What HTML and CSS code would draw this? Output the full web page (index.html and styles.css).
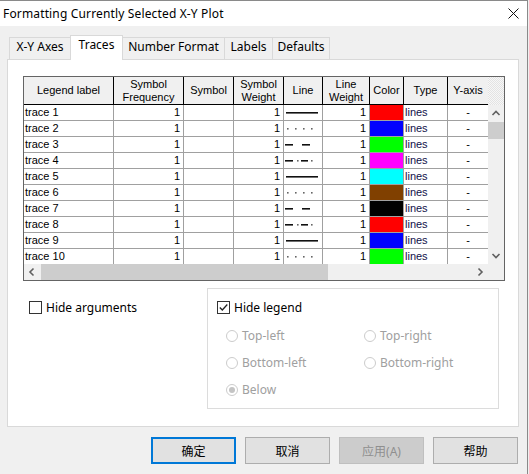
FILE: index.html
```html
<!DOCTYPE html>
<html>
<head>
<meta charset="utf-8">
<link rel="stylesheet" href="styles.css">
</head>
<body>
<div class="window">
  <div class="titlebar">
    <span class="title">Formatting Currently Selected X-Y Plot</span>
    <svg class="close" width="11" height="11" viewBox="0 0 11 11"><path d="M0.5 0.5 L10.5 10.5 M10.5 0.5 L0.5 10.5" stroke="#111" stroke-width="1" fill="none"/></svg>
  </div>
  <div class="tabs">
    <div class="tab t1">X-Y Axes</div>
    <div class="tab t2 sel">Traces</div>
    <div class="tab t3">Number Format</div>
    <div class="tab t4">Labels</div>
    <div class="tab t5">Defaults</div>
  </div>
  <div class="panel">
    <div class="grid">
      <div class="head">
        <div class="hc">Legend label</div>
        <div class="hc">Symbol<br>Frequency</div>
        <div class="hc">Symbol</div>
        <div class="hc">Symbol<br>Weight</div>
        <div class="hc">Line</div>
        <div class="hc">Line<br>Weight</div>
        <div class="hc">Color</div>
        <div class="hc">Type</div>
        <div class="hc">Y-axis</div>
      </div>
      <div class="hatch"></div>
      <div class="rows">
        <div class="c lbl">trace 1</div><div class="c num">1</div><div class="c"></div><div class="c num">1</div><div class="c ln"><svg viewBox="0 0 38 15" width="38" height="15"><rect x="2" y="7" width="32" height="1.6" fill="#111"/></svg></div><div class="c num">1</div><div class="c col red"></div><div class="c typ">lines</div><div class="c ya">-</div>
        <div class="c lbl">trace 2</div><div class="c num">1</div><div class="c"></div><div class="c num">1</div><div class="c ln"><svg viewBox="0 0 38 15" width="38" height="15"><g fill="#666"><rect x="3" y="7" width="1.6" height="1.6"/><rect x="11" y="7" width="1.6" height="1.6"/><rect x="19" y="7" width="1.6" height="1.6"/><rect x="27" y="7" width="1.6" height="1.6"/></g></svg></div><div class="c num">1</div><div class="c col blue"></div><div class="c typ">lines</div><div class="c ya">-</div>
        <div class="c lbl">trace 3</div><div class="c num">1</div><div class="c"></div><div class="c num">1</div><div class="c ln"><svg viewBox="0 0 38 15" width="38" height="15"><g fill="#111"><rect x="1" y="7" width="8" height="1.6"/><rect x="18" y="7" width="8" height="1.6"/></g></svg></div><div class="c num">1</div><div class="c col lime"></div><div class="c typ">lines</div><div class="c ya">-</div>
        <div class="c lbl">trace 4</div><div class="c num">1</div><div class="c"></div><div class="c num">1</div><div class="c ln"><svg viewBox="0 0 38 15" width="38" height="15"><g fill="#111"><rect x="1" y="7" width="8" height="1.6"/><rect x="17" y="7" width="7" height="1.6"/></g><g fill="#666"><rect x="13" y="7" width="1.6" height="1.6"/><rect x="27" y="7" width="1.6" height="1.6"/></g></svg></div><div class="c num">1</div><div class="c col magenta"></div><div class="c typ">lines</div><div class="c ya">-</div>
        <div class="c lbl">trace 5</div><div class="c num">1</div><div class="c"></div><div class="c num">1</div><div class="c ln"><svg viewBox="0 0 38 15" width="38" height="15"><rect x="2" y="7" width="32" height="1.6" fill="#111"/></svg></div><div class="c num">1</div><div class="c col cyan"></div><div class="c typ">lines</div><div class="c ya">-</div>
        <div class="c lbl">trace 6</div><div class="c num">1</div><div class="c"></div><div class="c num">1</div><div class="c ln"><svg viewBox="0 0 38 15" width="38" height="15"><g fill="#666"><rect x="3" y="7" width="1.6" height="1.6"/><rect x="11" y="7" width="1.6" height="1.6"/><rect x="19" y="7" width="1.6" height="1.6"/><rect x="27" y="7" width="1.6" height="1.6"/></g></svg></div><div class="c num">1</div><div class="c col brown"></div><div class="c typ">lines</div><div class="c ya">-</div>
        <div class="c lbl">trace 7</div><div class="c num">1</div><div class="c"></div><div class="c num">1</div><div class="c ln"><svg viewBox="0 0 38 15" width="38" height="15"><g fill="#111"><rect x="1" y="7" width="8" height="1.6"/><rect x="18" y="7" width="8" height="1.6"/></g></svg></div><div class="c num">1</div><div class="c col black"></div><div class="c typ">lines</div><div class="c ya">-</div>
        <div class="c lbl">trace 8</div><div class="c num">1</div><div class="c"></div><div class="c num">1</div><div class="c ln"><svg viewBox="0 0 38 15" width="38" height="15"><g fill="#111"><rect x="1" y="7" width="8" height="1.6"/><rect x="17" y="7" width="7" height="1.6"/></g><g fill="#666"><rect x="13" y="7" width="1.6" height="1.6"/><rect x="27" y="7" width="1.6" height="1.6"/></g></svg></div><div class="c num">1</div><div class="c col red"></div><div class="c typ">lines</div><div class="c ya">-</div>
        <div class="c lbl">trace 9</div><div class="c num">1</div><div class="c"></div><div class="c num">1</div><div class="c ln"><svg viewBox="0 0 38 15" width="38" height="15"><rect x="2" y="7" width="32" height="1.6" fill="#111"/></svg></div><div class="c num">1</div><div class="c col blue"></div><div class="c typ">lines</div><div class="c ya">-</div>
        <div class="c lbl">trace 10</div><div class="c num">1</div><div class="c"></div><div class="c num">1</div><div class="c ln"><svg viewBox="0 0 38 15" width="38" height="15"><g fill="#666"><rect x="3" y="7" width="1.6" height="1.6"/><rect x="11" y="7" width="1.6" height="1.6"/><rect x="19" y="7" width="1.6" height="1.6"/><rect x="27" y="7" width="1.6" height="1.6"/></g></svg></div><div class="c num">1</div><div class="c col lime"></div><div class="c typ">lines</div><div class="c ya">-</div>
      </div>
      <div class="vscroll">
        <div class="arrow"><svg width="16" height="16" viewBox="0 0 16 16"><polyline points="4.5,10 8,6.5 11.5,10" fill="none" stroke="#606060" stroke-width="1.6"/></svg></div>
        <div class="vthumb"></div>
        <div class="vtrack"></div>
        <div class="arrow"><svg width="16" height="16" viewBox="0 0 16 16"><polyline points="4.5,6 8,9.5 11.5,6" fill="none" stroke="#606060" stroke-width="1.6"/></svg></div>
      </div>
      <div class="hscroll">
        <div class="arrow"><svg width="16" height="16" viewBox="0 0 16 16"><polyline points="9.5,4.5 6,8 9.5,11.5" fill="none" stroke="#606060" stroke-width="1.6"/></svg></div>
        <div class="hthumb"></div>
        <div class="htrack"></div>
        <div class="arrow"><svg width="16" height="16" viewBox="0 0 16 16"><polyline points="6.5,4.5 10,8 6.5,11.5" fill="none" stroke="#606060" stroke-width="1.6"/></svg></div>
      </div>
      <div class="corner"></div>
    </div>
    <div class="options">
      <div class="opt-left">
        <label class="chk"><span class="box"></span><span>Hide arguments</span></label>
      </div>
      <div class="group">
        <label class="chk"><span class="box"><svg width="11" height="11" viewBox="0 0 11 11"><polyline points="1.8,5.5 4.3,8 9.3,2.5" fill="none" stroke="#222" stroke-width="1.3"/></svg></span><span>Hide legend</span></label>
        <div class="radios">
          <div class="radio"><span class="circ"></span><span>Top-left</span></div>
          <div class="radio"><span class="circ"></span><span>Top-right</span></div>
          <div class="radio"><span class="circ"></span><span>Bottom-left</span></div>
          <div class="radio"><span class="circ"></span><span>Bottom-right</span></div>
          <div class="radio"><span class="circ on"></span><span>Below</span></div>
        </div>
      </div>
    </div>
  </div>
  <div class="buttons">
    <div class="btn default">确定</div>
    <div class="btn">取消</div>
    <div class="btn disabled">应用(A)</div>
    <div class="btn">帮助</div>
  </div>
</div>
</body>
</html>
```

FILE: styles.css
```css
html, body {
  margin: 0;
  padding: 0;
  background: #f0f0f0;
}
body {
  font-family: "Noto Sans", "Noto Sans CJK SC", sans-serif;
  font-size: 12px;
  color: #000;
}
.window {
  width: 528px;
  height: 474px;
  box-sizing: border-box;
  border-top: 1px solid #8a8a8a;
  border-right: 1px solid #8a8a8a;
  background: #f0f0f0;
  overflow: hidden;
}
.titlebar {
  height: 25px;
  background: #fff;
  display: flex;
  align-items: center;
  justify-content: space-between;
  padding: 0 8px 0 3px;
}
.title {
  white-space: nowrap;
  letter-spacing: 0.15px;
}
.close {
  display: block;
}
.tabs {
  display: flex;
  align-items: flex-end;
  height: 24px;
  margin-top: 9px;
  padding-left: 9px;
}
.tab {
  height: 22px;
  box-sizing: border-box;
  border: 1px solid #d9d9d9;
  border-bottom: none;
  margin-right: -1px;
  background: #f0f0f0;
  text-align: center;
  line-height: 18px;
  white-space: nowrap;
}
.t1 { width: 62px; }
.t2 { width: 53px; }
.t3 { width: 103px; }
.t4 { width: 49px; }
.t5 { width: 58px; }
.tab.sel {
  height: 25px;
  margin-bottom: -1px;
  background: #fff;
  position: relative;
  z-index: 1;
  padding-top: 0;
}
.panel {
  margin-left: 7px;
  width: 512px;
  height: 368px;
  box-sizing: border-box;
  border: 1px solid #d9d9d9;
  background: #fff;
  padding: 16px 0 0 15px;
}
.grid {
  display: grid;
  grid-template-columns: 464px 16px;
  grid-template-rows: 28px 159px 16px;
  width: 482px;
  height: 205px;
  box-sizing: border-box;
  border: 1px solid #646464;
  font-family: "Liberation Sans", Arial, sans-serif;
  font-size: 11px;
}
.head, .rows {
  display: grid;
  grid-template-columns: 90px 70px 50px 50px 39px 47px 34px 44px 40px;
}
.head {
  background: #f0f0f0;
}
.hc {
  border-right: 1px solid #000;
  border-bottom: 1px solid #000;
  display: flex;
  align-items: center;
  justify-content: center;
  text-align: center;
  line-height: 13px;
}
.hc:last-child {
  border-right: none;
}
.hatch {
  background: repeating-conic-gradient(#e3e3e3 0 25%, #f7f7f7 0 50%) 0 0 / 2px 2px;
}
.rows {
  grid-auto-rows: 16px;
  overflow: hidden;
  background: #fff;
}
.c {
  border-right: 1px solid #a0a0a0;
  border-bottom: 1px solid #a0a0a0;
  line-height: 15px;
  white-space: nowrap;
  overflow: hidden;
}
.c:nth-child(9n) {
  border-right: none;
}
.lbl { padding-left: 1px; }
.num { text-align: right; padding-right: 3px; }
.typ { padding-left: 1px; color: #10104a; }
.ya { text-align: center; }
.ln svg { display: block; }
.red { background: #ff0000; }
.blue { background: #0000ff; }
.lime { background: #00ff00; }
.magenta { background: #ff00ff; }
.cyan { background: #00ffff; }
.brown { background: #804000; }
.black { background: #000000; }
.vscroll {
  display: flex;
  flex-direction: column;
  background: #f0f0f0;
}
.arrow {
  width: 16px;
  height: 16px;
  flex: none;
}
.arrow svg { display: block; }
.vthumb {
  height: 17px;
  margin-top: 1px;
  background: #cdcdcd;
  flex: none;
}
.vtrack { flex: 1; }
.hscroll {
  display: flex;
  background: #f0f0f0;
}
.hthumb {
  width: 287px;
  margin-left: 1px;
  background: #cdcdcd;
  flex: none;
}
.htrack { flex: 1; }
.corner { background: #f0f0f0; }
.options {
  display: flex;
  margin-top: 7px;
}
.opt-left {
  width: 184px;
  box-sizing: border-box;
  padding: 13px 0 0 6px;
}
.chk {
  display: flex;
  align-items: center;
  gap: 4px;
  height: 13px;
  white-space: nowrap;
}
.box {
  width: 13px;
  height: 13px;
  box-sizing: border-box;
  border: 1px solid #333;
  background: #fff;
  display: flex;
  align-items: center;
  justify-content: center;
  flex: none;
}
.box svg { display: block; }
.group {
  width: 292px;
  height: 121px;
  box-sizing: border-box;
  border: 1px solid #dcdcdc;
  padding: 12px 0 0 9px;
}
.radios {
  display: grid;
  grid-template-columns: 138px auto;
  grid-auto-rows: 27px;
  align-items: center;
  margin: 8px 0 0 9px;
}
.radio {
  display: flex;
  align-items: center;
  gap: 4px;
  color: #a0a0a0;
  white-space: nowrap;
}
.circ {
  width: 12px;
  height: 12px;
  box-sizing: border-box;
  border: 1px solid #cccccc;
  border-radius: 50%;
  background: #fff;
  display: flex;
  align-items: center;
  justify-content: center;
  flex: none;
}
.circ.on::after {
  content: "";
  width: 6px;
  height: 6px;
  border-radius: 50%;
  background: #c4c4c4;
}
.buttons {
  display: flex;
  gap: 9px;
  margin-top: 10px;
  padding-left: 151px;
}
.btn {
  width: 85px;
  height: 27px;
  box-sizing: border-box;
  border: 1px solid #adadad;
  background: #e1e1e1;
  display: flex;
  align-items: center;
  justify-content: center;
}
.btn.default {
  border: 2px solid #0078d7;
}
.btn.disabled {
  background: #cccccc;
  border-color: #bfbfbf;
  color: #8f8f8f;
}
```
